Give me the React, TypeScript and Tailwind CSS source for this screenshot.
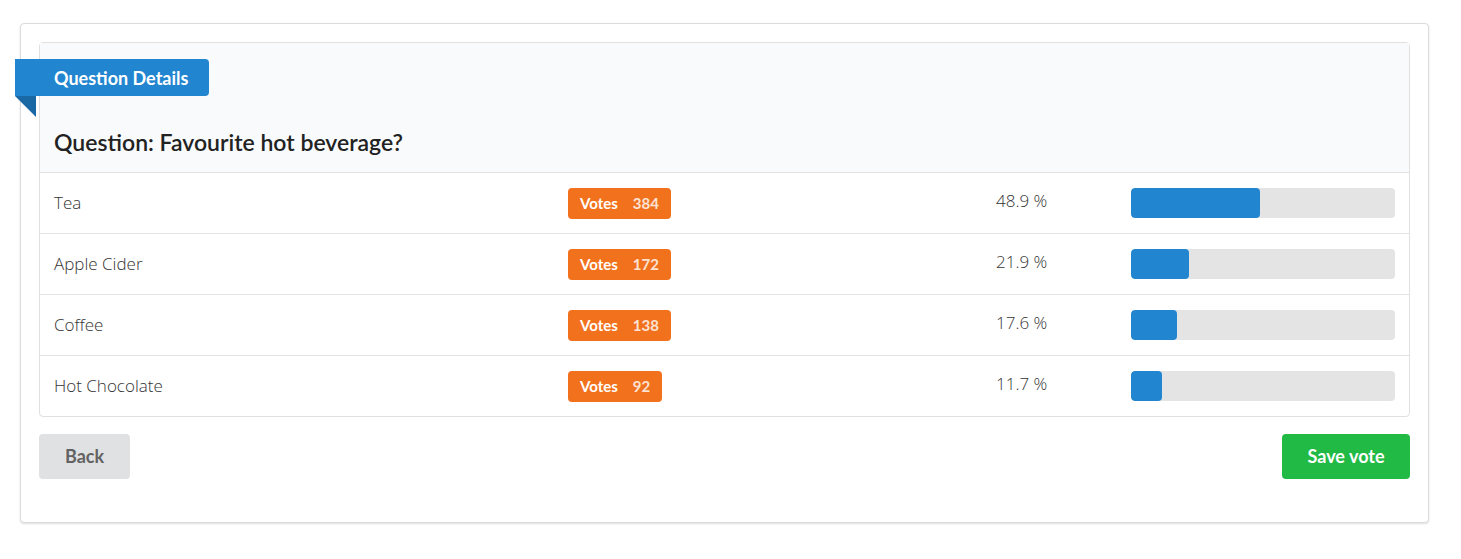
const ANSWERS = [
  { label: "Tea", votes: 384, pct: 48.9 },
  { label: "Apple Cider", votes: 172, pct: 21.9 },
  { label: "Coffee", votes: 138, pct: 17.6 },
  { label: "Hot Chocolate", votes: 92, pct: 11.7 },
];

export default function App() {
  return (
    <div className="min-h-screen bg-white pt-[23px] pl-5 font-['Lato',sans-serif]">
      <div className="w-[1409px] rounded border border-[#dcdcdd] bg-white p-[18px] shadow-[0_1px_2px_0_rgba(34,36,38,0.15)]">
        {/* question segment */}
        <div className="rounded border border-[#e0e0e0]">
          <div className="relative bg-[#f9fafb] px-[14px] pt-[16px] pb-[16px]">
            <div className="relative -ml-[39px] flex h-[37px] w-fit items-center rounded-r bg-[#2185d0] pt-[2px] pl-[39px] pr-[21px] text-[18px] font-bold text-white">
              Question Details
              <span className="absolute left-0 top-full h-0 w-0 border-t-[21px] border-l-[21px] border-t-[#1a69a4] border-l-transparent" />
            </div>
            <h3 className="mt-[32px] text-[23px] leading-[28px] font-semibold text-[#222]">
              Question: Favourite hot beverage?
            </h3>
          </div>

          {ANSWERS.map((a) => (
            <div
              key={a.label}
              className="grid h-[61px] grid-cols-[513px_428px_135px_1fr] items-center border-t border-[#e3e3e3] font-['Open_Sans',sans-serif] text-[17px] font-light text-[#333]"
            >
              <div className="pl-[14px]">{a.label}</div>
              <div className="pl-[15px]">
                <span className="inline-flex h-[31px] items-center rounded bg-[#f2711c] px-3 font-['Lato',sans-serif] text-[15px] font-bold text-white">
                  Votes
                  <span className="ml-[15px] opacity-80">{a.votes}</span>
                </span>
              </div>
              <div className="pb-[5px] pl-[15px]">{a.pct} %</div>
              <div className="pl-[15px] pr-[14px]">
                <div className="h-[30px] w-full overflow-hidden rounded bg-[#e4e4e4]">
                  <div
                    className="h-full rounded bg-[#2185d0]"
                    style={{ width: `${a.pct}%` }}
                  />
                </div>
              </div>
            </div>
          ))}
        </div>

        {/* actions */}
        <div className="mt-[17px] mb-[25px] flex items-center justify-between">
          <button className="h-[45px] w-[91px] rounded bg-[#e0e1e2] text-[18px] font-bold text-[#626262]">
            Back
          </button>
          <button className="h-[45px] w-[128px] rounded bg-[#21ba45] text-[18px] font-bold text-white">
            Save vote
          </button>
        </div>
      </div>
    </div>
  );
}
